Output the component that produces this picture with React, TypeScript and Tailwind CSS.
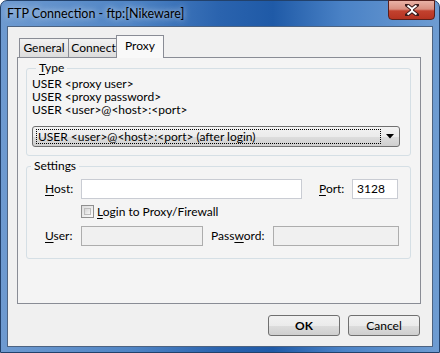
import React from "react";

const font = { fontFamily: 'Lato, "Noto Sans", "Liberation Sans", sans-serif' };

function U({ c }: { c: string }) {
  return <span className="underline underline-offset-[2px] decoration-[1px]">{c}</span>;
}

function Tab({ label, selected, w }: { label: string; selected?: boolean; w: string }) {
  if (selected) {
    return (
      <div className={`${w} h-[23px] -ml-[2px] pt-[2px] border border-b-0 border-[#898c95] bg-[#f9f9f9] relative z-10 mb-[-1px] text-[12px] leading-[16px] text-center`}>
        {label}
      </div>
    );
  }
  return (
    <div className={`${w} h-[19px] pt-[1px] border border-b-0 border-[#898c95] bg-gradient-to-b from-[#f2f2f2] to-[#dcdcdc] text-[12px] leading-[16px] -mr-[1px] text-center`}>
      {label}
    </div>
  );
}

export default function App() {
  return (
    <div style={font} className="w-[440px] h-[353px] overflow-hidden text-black">
      <div className="w-[440px] h-[353px] rounded-t-[7px] border border-[#22416b] bg-[linear-gradient(90deg,#6e9ad0_0%,#4f84c4_30%,#2a63ae_50%,#1f5aa7_62%,#4a82c6_78%,#6e9cd2_100%)] flex flex-col">
        <div className="h-[25px] flex items-start justify-between">
          <div className="pl-[6px] pt-[5px] text-[12.5px] leading-[16px] text-black [text-shadow:0_0_6px_rgba(255,255,255,0.9)]">
            FTP Connection - ftp:[Nikeware]
          </div>
          <div className="mr-[4px] -mt-[1px] w-[47px] h-[20px] rounded-b-[4px] border border-[#5a1f1a] bg-[linear-gradient(180deg,#e9b2a6_0%,#d98f80_45%,#c2412e_55%,#b53321_100%)] flex items-center justify-center">
            <svg width="14" height="12" viewBox="0 0 14 12">
              <path d="M2 1 L7 5 L12 1 M2 11 L7 7 L12 11" stroke="#3a1a1a" strokeWidth="4" fill="none" strokeLinecap="square" />
              <path d="M2.5 1.5 L7 5 L11.5 1.5 M2.5 10.5 L7 7 L11.5 10.5 M7 5 L7 7" stroke="#ffffff" strokeWidth="2" fill="none" />
            </svg>
          </div>
        </div>
        <div className="ml-[6px] w-[426px] h-[321px] border border-[#4d6381] bg-[#f0f0f0] flex flex-col">
          <div className="pl-[11px] pt-[8px] flex items-end h-[30px]">
            <Tab label="General" w="w-[50px]" />
            <Tab label="Connect" w="w-[51px]" />
            <Tab label="Proxy" w="w-[48px]" selected />
          </div>
          <div className="ml-[9px] w-[404px] h-[247px] border border-[#898c95] bg-[#f4f4f4] flex flex-col text-[12px]">
            <fieldset className="mt-[3px] ml-[8px] w-[385px] border border-[#d5dfe5] rounded-[3px] pl-[5px] pb-[8px]">
              <legend className="ml-[4px] px-[3px] leading-[14px]">
                <U c="T" />ype
              </legend>
              <div className="pt-[2px] leading-[13px]">
                <div>USER &lt;proxy user&gt;</div>
                <div>USER &lt;proxy password&gt;</div>
                <div>USER &lt;user&gt;@&lt;host&gt;:&lt;port&gt;</div>
              </div>
              <div className="mt-[10px] w-[368px] h-[21px] rounded-[3px] border border-[#707070] bg-[linear-gradient(180deg,#f2f2f2_0%,#ebebeb_50%,#dddddd_51%,#cfcfcf_100%)] flex items-center">
                <div className="ml-[3px] w-[345px] h-[15px] border border-dotted border-black leading-[13px] pl-[1px]">
                  USER &lt;user&gt;@&lt;host&gt;:&lt;port&gt; (after login)
                </div>
                <div className="flex-1 flex justify-center">
                  <svg width="8" height="5" viewBox="0 0 8 5">
                    <path d="M0 0 H8 L4 4.5 Z" fill="#000" />
                  </svg>
                </div>
              </div>
            </fieldset>
            <fieldset className="mt-[3px] ml-[8px] w-[385px] h-[100px] border border-[#d5dfe5] rounded-[3px]">
              <legend className="ml-[4px] px-[3px] leading-[14px]">Settings</legend>
              <div className="pt-[6px] flex items-center h-[26px]">
                <div className="ml-[18px] w-[36px]">
                  <U c="H" />ost:
                </div>
                <div className="w-[221px] h-[20px] border border-[#c9ccd3] bg-white" />
                <div className="ml-[17px] w-[33px]">
                  <U c="P" />ort:
                </div>
                <div className="w-[46px] h-[20px] border border-[#c9ccd3] bg-white pl-[4px] leading-[18px]">3128</div>
              </div>
              <div className="flex items-center h-[25px] pl-[54px]">
                <div className="w-[13px] h-[13px] border border-[#8f8f8f] bg-[linear-gradient(135deg,#dcdcdc,#fbfbfb)] p-[2px]">
                  <div className="w-full h-full border border-[#bdbdbd] bg-[linear-gradient(135deg,#d6d6d6,#f5f5f5)]" />
                </div>
                <div className="ml-[3px]">
                  <U c="L" />ogin to Proxy/Firewall
                </div>
              </div>
              <div className="flex items-center h-[23px]">
                <div className="ml-[18px] w-[36px]">
                  <U c="U" />ser:
                </div>
                <div className="w-[122px] h-[20px] border border-[#adadad] bg-[#f0f0f0]" />
                <div className="ml-[8px] w-[62px]">
                  Pass<U c="w" />ord:
                </div>
                <div className="w-[126px] h-[20px] border border-[#adadad] bg-[#f0f0f0]" />
              </div>
            </fieldset>
          </div>
          <div className="mt-[11px] flex justify-end gap-[8px] pr-[12px]">
            <button className="w-[72px] h-[21px] rounded-[3px] border border-[#707070] bg-[linear-gradient(180deg,#f2f2f2_0%,#ebebeb_50%,#dddddd_51%,#cfcfcf_100%)] text-[12px] font-bold leading-[18px]">
              OK
            </button>
            <button className="w-[72px] h-[21px] rounded-[3px] border border-[#707070] bg-[linear-gradient(180deg,#f2f2f2_0%,#ebebeb_50%,#dddddd_51%,#cfcfcf_100%)] text-[12px] leading-[18px]">
              Cancel
            </button>
          </div>
        </div>
      </div>
    </div>
  );
}
